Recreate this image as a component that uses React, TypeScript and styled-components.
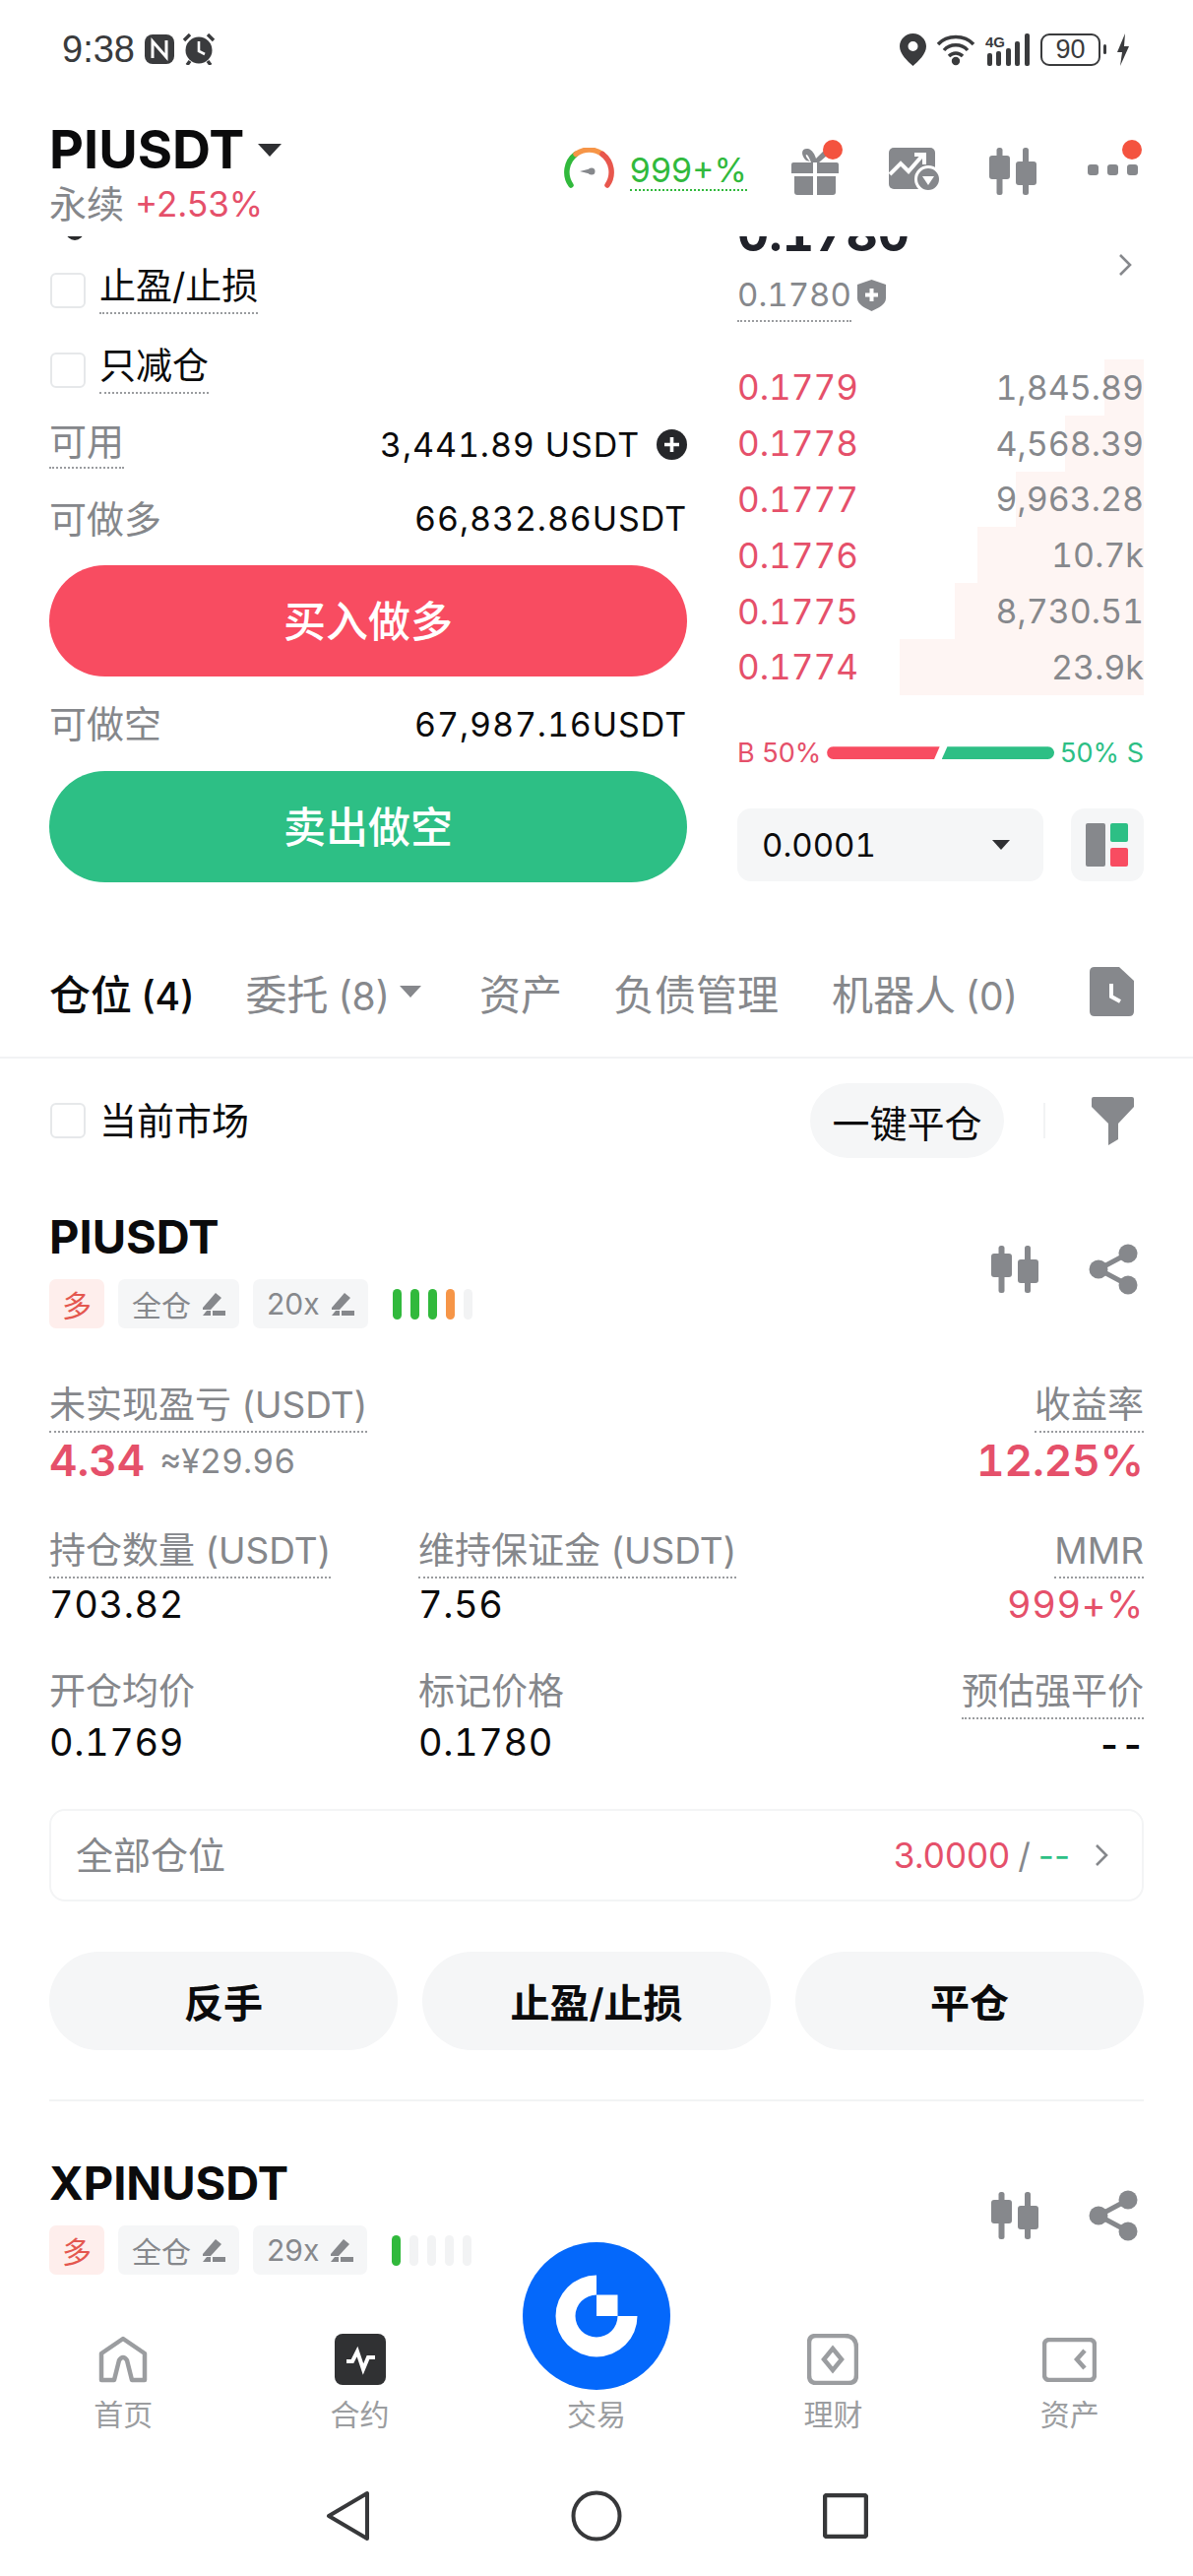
import styled, { createGlobalStyle } from "styled-components";

const GREY = "#86888c";
const LABEL = "#85878b";
const RED = "#e5506a";
const BUY = "#f84c61";
const SELL = "#2dbf85";
const SOFT = "#f5f6f7";
const DARK = "#303133";

const GlobalStyle = createGlobalStyle`
  html, body {
    margin: 0;
    padding: 0;
    background: #fff;
    font-family: Inter, "Noto Sans CJK SC", sans-serif;
    color: #0b0b0c;
  }
  * { box-sizing: border-box; }
  svg { display: block; flex-shrink: 0; }
`;

const Page = styled.div`
  width: 1212px;
  height: 2616px;
  display: flex;
  flex-direction: column;
  overflow: hidden;
  background: #fff;
`;

const StatusBar = styled.div`
  height: 100px;
  flex-shrink: 0;
  padding: 0 64px 0 63px;
  display: flex;
  align-items: center;
  justify-content: space-between;
  color: #3a3b3d;
`;

const StatusGroup = styled.div<{ $gap: number }>`
  display: flex;
  align-items: center;
  gap: ${({ $gap }) => $gap}px;
`;

const Clock = styled.span`
  font-family: "Liberation Sans", sans-serif;
  font-size: 38px;
  margin-right: 2px;
`;

const NetLabel = styled.text`
  font-family: "Liberation Sans", sans-serif;
  font-size: 15px;
  font-weight: 700;
  fill: #3a3b3d;
`;

const Battery = styled.div`
  width: 61px;
  height: 33px;
  border: 2.5px solid #3a3b3d;
  border-radius: 9px;
  display: flex;
  align-items: center;
  justify-content: center;
  font-family: "Liberation Sans", sans-serif;
  font-size: 27px;
  position: relative;
  &::after {
    content: "";
    position: absolute;
    right: -8px;
    top: 9px;
    width: 3px;
    height: 10px;
    background: #3a3b3d;
    border-radius: 2px;
  }
`;

const BoltIcon = styled.svg`
  margin-left: 6px;
`;

const Header = styled.div`
  height: 140px;
  flex-shrink: 0;
  padding: 22px 56px 0 50px;
  display: flex;
  justify-content: space-between;
`;

const Symbol = styled.div`
  display: flex;
  align-items: center;
  gap: 14px;
  font-size: 54px;
  font-weight: 700;
  line-height: 60px;
`;

const Caret = styled.div<{ $size: number; $color: string }>`
  width: 0;
  height: 0;
  border-left: ${({ $size }) => $size}px solid transparent;
  border-right: ${({ $size }) => $size}px solid transparent;
  border-top: ${({ $size }) => $size * 1.15}px solid ${({ $color }) => $color};
`;

const SubLine = styled.div`
  display: flex;
  align-items: center;
  gap: 11px;
  margin-top: 3px;
  font-size: 38px;
  line-height: 44px;
  color: ${LABEL};
`;

const Change = styled.span`
  font-size: 35px;
  color: ${RED};
`;

const Tools = styled.div`
  display: flex;
  align-items: flex-start;
  padding-top: 28px;
`;

const Risk = styled.div`
  display: flex;
  gap: 15px;
  margin-right: 45px;
`;

const RiskValue = styled.span`
  font-size: 34px;
  line-height: 36px;
  height: 44px;
  padding-top: 5px;
  color: #31b93c;
  border-bottom: 2.5px dotted #31b93c;
`;

const ToolIcon = styled.div<{ $left: number; $dot?: boolean }>`
  position: relative;
  margin-left: ${({ $left }) => $left}px;
  ${({ $dot }) =>
    $dot &&
    `&::after {
      content: "";
      position: absolute;
      right: -4px;
      top: -8px;
      width: 20px;
      height: 20px;
      border-radius: 50%;
      background: #f4533f;
    }`}
`;

const MoreWrap = styled.div`
  padding-top: 17px;
`;

const Scroll = styled.div`
  flex: 1;
  min-height: 0;
  overflow: hidden;
`;

const TradeGrid = styled.div`
  display: grid;
  grid-template-columns: 648px 413px;
  column-gap: 51px;
  padding: 0 50px;
  height: 655px;
`;

const Column = styled.div`
  min-width: 0;
`;

const Knob = styled.div`
  width: 18px;
  height: 18px;
  margin: -14px 0 10px 17px;
  border-radius: 50%;
  background: #2a2b2d;
`;

const CheckRow = styled.div<{ $h: number }>`
  height: ${({ $h }) => $h}px;
  display: flex;
  align-items: center;
  gap: 14px;
`;

const Box = styled.div`
  width: 36px;
  height: 36px;
  margin-left: 1px;
  border: 2.5px solid #e6e8ea;
  border-radius: 6px;
  background: #fff;
`;

const Dotted = styled.span<{ $size?: number; $color?: string; $plain?: boolean }>`
  display: inline-block;
  font-size: ${({ $size }) => $size ?? 37}px;
  line-height: 42px;
  padding-bottom: 5px;
  color: ${({ $color }) => $color ?? "#0b0b0c"};
  border-bottom: 2px dotted ${({ $plain }) => ($plain ? "transparent" : "#9a9c9f")};
  white-space: nowrap;
`;

const MarkPrice = styled(Dotted)`
  font-variant-numeric: tabular-nums;
`;

const Plain = styled.span<{ $size?: number; $color?: string }>`
  font-size: ${({ $size }) => $size ?? 37}px;
  line-height: 42px;
  color: ${({ $color }) => $color ?? "#0b0b0c"};
  white-space: nowrap;
`;

const InfoRow = styled.div<{ $h: number; $pad?: number }>`
  height: ${({ $h }) => $h}px;
  padding-bottom: ${({ $pad }) => $pad ?? 0}px;
  display: flex;
  align-items: center;
  justify-content: space-between;
`;

const Amount = styled.div`
  display: flex;
  align-items: center;
  gap: 17px;
  font-size: 34px;
  letter-spacing: 0.9px;
  font-variant-numeric: tabular-nums;
  white-space: nowrap;
`;

const TradeButton = styled.div<{ $bg: string }>`
  height: 113px;
  padding-bottom: 5px;
  border-radius: 57px;
  background: ${({ $bg }) => $bg};
  color: #fff;
  font-size: 43px;
  font-weight: 500;
  display: flex;
  align-items: center;
  justify-content: center;
`;

const PriceHead = styled.div`
  height: 125px;
  display: flex;
  justify-content: space-between;
  align-items: flex-start;
`;

const BigPrice = styled.div`
  margin-top: -28px;
  height: 51px;
  line-height: 51px;
  font-size: 50px;
  font-weight: 700;
  font-variant-numeric: tabular-nums;
  color: #20222a;
`;

const MarkLine = styled.div`
  margin-top: 15px;
  display: flex;
  align-items: flex-start;
  gap: 6px;
`;

const ShieldIcon = styled.svg`
  margin-top: 6px;
`;

const Chevron = styled.div`
  margin: 17px 12px 0 0;
`;

const Book = styled.div``;

const BookRow = styled.div`
  position: relative;
  height: 56.8px;
  display: flex;
  align-items: center;
  justify-content: space-between;
  font-size: 34px;
  font-variant-numeric: tabular-nums;
`;

const Depth = styled.div`
  position: absolute;
  right: 0;
  top: 0;
  bottom: 0;
  background: #fef5f3;
`;

const BookPrice = styled.span`
  position: relative;
  color: ${RED};
  font-size: 35px;
`;

const BookSize = styled.span`
  position: relative;
  color: ${GREY};
`;

const Ratio = styled.div`
  margin-top: 40px;
  height: 38px;
  display: flex;
  align-items: center;
  justify-content: space-between;
  font-size: 27px;
  white-space: nowrap;
`;

const RatioText = styled.span<{ $color: string }>`
  color: ${({ $color }) => $color};
`;

const RatioBars = styled.div`
  width: 231px;
  display: flex;
`;

const RatioBar = styled.div<{ $color: string; $side: "l" | "r" }>`
  flex: 1;
  height: 13px;
  background: ${({ $color }) => $color};
  ${({ $side }) =>
    $side === "l"
      ? "border-radius: 7px 0 0 7px; clip-path: polygon(0 0, 100% 0, 95% 100%, 0 100%); margin-right: 1px;"
      : "border-radius: 0 7px 7px 0; clip-path: polygon(5% 0, 100% 0, 100% 100%, 0 100%); margin-left: 1px;"}
`;

const DepthTools = styled.div`
  margin-top: 37px;
  display: flex;
  justify-content: space-between;
`;

const StepSelect = styled.div`
  width: 311px;
  height: 74px;
  border-radius: 14px;
  background: ${SOFT};
  padding: 0 34px 0 25px;
  display: flex;
  align-items: center;
  justify-content: space-between;
  font-size: 33px;
  font-variant-numeric: tabular-nums;
`;

const LayoutButton = styled.div`
  width: 74px;
  height: 74px;
  border-radius: 14px;
  background: ${SOFT};
  display: flex;
  align-items: center;
  justify-content: center;
`;

const Tabs = styled.div`
  margin-top: 50px;
  height: 130px;
  padding: 0 60px 4px 50px;
  border-bottom: 2px solid #f2f3f4;
  display: flex;
  align-items: center;
`;

const Tab = styled.div<{ $active?: boolean; $left?: number }>`
  display: flex;
  align-items: center;
  gap: 10px;
  margin-left: ${({ $left }) => $left ?? 0}px;
  font-size: 42px;
  white-space: nowrap;
  color: ${({ $active }) => ($active ? "#0b0b0c" : GREY)};
  font-weight: ${({ $active }) => ($active ? 500 : 400)};
`;

const TabCount = styled.span`
  font-size: 39px;
  margin-left: -2px;
`;

const TabEnd = styled.div`
  margin-left: auto;
`;

const FilterRow = styled.div`
  margin-top: 25px;
  height: 76px;
  padding: 0 60px 0 50px;
  display: flex;
  align-items: center;
  gap: 14px;
`;

const CloseAll = styled.div`
  margin-left: auto;
  width: 197px;
  height: 76px;
  border-radius: 38px;
  background: ${SOFT};
  font-size: 38px;
  display: flex;
  align-items: center;
  justify-content: center;
`;

const Divider = styled.div`
  width: 2px;
  height: 36px;
  margin: 0 33px 0 26px;
  background: #f2f3f4;
`;

const Card = styled.div<{ $top: number }>`
  margin-top: ${({ $top }) => $top}px;
  padding: 0 50px;
`;

const CardHead = styled.div`
  display: flex;
  justify-content: space-between;
  align-items: center;
`;

const CardSymbol = styled.div`
  font-size: 47px;
  line-height: 56px;
  font-weight: 700;
`;

const BadgeRow = styled.div`
  margin-top: 15px;
  display: flex;
  align-items: center;
  gap: 14px;
`;

const Badge = styled.div<{ $side?: boolean }>`
  height: 50px;
  padding: 0 ${({ $side }) => ($side ? 13 : 14)}px;
  border-radius: 7px;
  background: ${({ $side }) => ($side ? "#feeeec" : SOFT)};
  color: ${({ $side }) => ($side ? "#e4574f" : GREY)};
  font-size: 30px;
  display: flex;
  align-items: center;
  gap: 11px;
`;

const Leverage = styled.div`
  display: flex;
  gap: 9px;
  margin-left: 11px;
`;

const LevBar = styled.div<{ $color: string }>`
  width: 9px;
  height: 31px;
  border-radius: 5px;
  background: ${({ $color }) => $color};
`;

const CardTools = styled.div`
  display: flex;
  align-items: center;
  gap: 51px;
  margin-right: 6px;
`;

const StatRow = styled.div<{ $top: number }>`
  margin-top: ${({ $top }) => $top}px;
  display: grid;
  grid-template-columns: 375px 1fr auto;
`;

const StatCell = styled.div<{ $right?: boolean }>`
  display: flex;
  flex-direction: column;
  align-items: ${({ $right }) => ($right ? "flex-end" : "flex-start")};
`;

const StatValue = styled.div<{ $color?: string; $big?: boolean; $tight?: boolean }>`
  display: flex;
  align-items: center;
  gap: 15px;
  height: 46px;
  margin-top: ${({ $big, $tight }) => ($big ? 5 : $tight ? 0 : 3)}px;
  font-size: ${({ $big }) => ($big ? 44 : 38)}px;
  font-weight: ${({ $big }) => ($big ? 600 : 400)};
  letter-spacing: ${({ $big }) => ($big ? 0 : 0.6)}px;
  font-variant-numeric: tabular-nums;
  color: ${({ $color }) => $color ?? "#0b0b0c"};
`;

const Dash = styled.span`
  font-weight: 600;
  letter-spacing: -1px;
  padding-top: 6px;
`;

const Approx = styled.span`
  font-size: 34px;
  font-weight: 400;
  letter-spacing: 0;
  color: ${GREY};
`;

const AllPositions = styled.div`
  margin-top: 45px;
  height: 94px;
  padding: 0 34px 0 25px;
  border: 2px solid #f3f4f5;
  border-radius: 16px;
  display: flex;
  align-items: center;
  justify-content: space-between;
`;

const PosValues = styled.div`
  display: flex;
  align-items: center;
  font-size: 35px;
  color: ${GREY};
`;

const PosSlash = styled.span`
  margin: 0 8px;
`;

const PosChevron = styled.div`
  margin-left: 25px;
`;

const ActionRow = styled.div`
  margin-top: 51px;
  display: grid;
  grid-template-columns: repeat(3, 1fr);
  gap: 25px;
`;

const Action = styled.div`
  height: 100px;
  border-radius: 50px;
  background: ${SOFT};
  font-size: 40px;
  font-weight: 600;
  display: flex;
  align-items: center;
  justify-content: center;
`;

const CardRule = styled.div`
  margin-top: 50px;
  height: 2px;
  background: #f2f3f4;
`;

const BottomNav = styled.div`
  position: relative;
  flex-shrink: 0;
  height: 276px;
  background: #fff;
  display: flex;
  flex-direction: column;
`;

const NavItems = styled.div`
  padding: 29px 5px 0;
  display: grid;
  grid-template-columns: repeat(5, 1fr);
`;

const NavItem = styled.div`
  display: flex;
  flex-direction: column;
  align-items: center;
`;

const NavIcon = styled.div`
  height: 54px;
  display: flex;
  align-items: center;
  justify-content: center;
`;

const NavText = styled.div`
  margin-top: 9px;
  height: 40px;
  line-height: 40px;
  font-size: 30px;
  color: #9b9da0;
`;

const TradeFab = styled.div`
  position: absolute;
  left: 531px;
  top: -63px;
  width: 150px;
  height: 150px;
  border-radius: 50%;
  background: #0468fb;
`;

const SystemBar = styled.div`
  margin-top: 57px;
  display: flex;
  justify-content: center;
  align-items: center;
  gap: 204px;
`;

const ledgerRows = [
  { price: "0.1779", size: "1,845.89", depth: 40 },
  { price: "0.1778", size: "4,568.39", depth: 80 },
  { price: "0.1777", size: "9,963.28", depth: 130 },
  { price: "0.1776", size: "10.7k", depth: 169 },
  { price: "0.1775", size: "8,730.51", depth: 192 },
  { price: "0.1774", size: "23.9k", depth: 248 },
];

const Candles = ({ size = 48 }: { size?: number }) => (
  <svg width={size} height={size} viewBox="0 0 48 48" fill={GREY}>
    <rect x="7.5" y="0" width="6" height="48" rx="2.5" />
    <rect x="0" y="8" width="21" height="24" rx="3" />
    <rect x="34" y="0" width="6" height="48" rx="2.5" />
    <rect x="27" y="14" width="21" height="24" rx="3" />
  </svg>
);

const Share = () => (
  <svg width="50" height="52" viewBox="0 0 50 52">
    <path d="M40 10 L10 26 L40 42" fill="none" stroke={GREY} strokeWidth="5" />
    <circle cx="40" cy="10" r="9.5" fill={GREY} />
    <circle cx="10" cy="26" r="9.5" fill={GREY} />
    <circle cx="40" cy="42" r="9.5" fill={GREY} />
  </svg>
);

const Pencil = () => (
  <svg width="24" height="25" viewBox="0 0 24 25" fill={GREY}>
    <path d="M14 1 L20 6 L9 18 H1 V16 Z" />
    <rect x="11" y="19" width="13" height="5" />
    <path d="M1 24 H9 V19 H5 Z" />
  </svg>
);

const ChevronIcon = ({ w = 14, h = 24 }: { w?: number; h?: number }) => (
  <svg width={w} height={h} viewBox="0 0 14 24" fill="none">
    <path d="M2 2 L12 12 L2 22" stroke={GREY} strokeWidth="2.6" />
  </svg>
);

const StatusIcons = () => (
  <StatusGroup $gap={10}>
    <svg width="27" height="33" viewBox="0 0 27 33">
      <path
        fillRule="evenodd"
        d="M13.5 0 C21 0 27 6 27 13 C27 21 19 28 13.5 33 C8 28 0 21 0 13 C0 6 6 0 13.5 0 Z M13.5 8 A5 5 0 1 0 13.5 18 A5 5 0 1 0 13.5 8 Z"
        fill="#3a3b3d"
      />
    </svg>
    <svg width="40" height="33" viewBox="0 0 40 33" fill="none" stroke="#3a3b3d" strokeWidth="3.4">
      <path d="M2 11 C11 1 29 1 38 11" />
      <path d="M8 17 C14 10 26 10 32 17" />
      <path d="M13 23 C17 19 23 19 27 23" />
      <circle cx="20" cy="28" r="2.5" fill="#3a3b3d" />
    </svg>
    <svg width="46" height="33" viewBox="0 0 46 33">
      <NetLabel x="0" y="14">4G</NetLabel>
      <g fill="#3a3b3d">
        <rect x="2" y="20" width="5" height="13" rx="2" />
        <rect x="11" y="18" width="5" height="15" rx="2" />
        <rect x="21" y="15" width="5" height="18" rx="2" />
        <rect x="30" y="8" width="5" height="25" rx="2" />
        <rect x="40" y="0" width="5" height="33" rx="2" />
      </g>
    </svg>
    <Battery>90</Battery>
    <BoltIcon width="14" height="33" viewBox="0 0 14 33" fill="#3a3b3d">
      <path d="M9 0 L1 19 H6 L4 33 L13 13 H8 Z" />
    </BoltIcon>
  </StatusGroup>
);

const Gauge = () => (
  <svg width="53" height="44" viewBox="0 0 53 44" fill="none" strokeWidth="5.5" strokeLinecap="round">
    <path d="M8 38 A23 23 0 0 1 13 6.5" stroke="#31b93c" />
    <path d="M13 6.5 A23 23 0 0 1 40 6.5" stroke="#f69547" />
    <path d="M40 6.5 A23 23 0 0 1 45 38" stroke="#e8574d" />
    <path d="M17 24 L29 21 V27 Z" fill={GREY} stroke="none" />
    <circle cx="29" cy="24" r="3.5" fill={GREY} stroke="none" />
  </svg>
);

const Gift = () => (
  <svg width="48" height="48" viewBox="0 0 48 48" fill={GREY}>
    <path d="M15 13 C9 7 10 0 17 1 C21 2 24 7 25 11 L33 3 L36 8 L28 15 H20 C19 12 17 7 15 7 C14 8 16 11 19 14 Z" />
    <path d="M2 15 H22 V26 H0 V17 Q0 15 2 15 Z" />
    <path d="M26 15 H46 Q48 15 48 17 V26 H26 Z" />
    <path d="M3 29 H22 V48 H6 Q3 48 3 45 Z" />
    <path d="M26 29 H45 V45 Q45 48 42 48 H26 Z" />
  </svg>
);

const Trend = () => (
  <svg width="52" height="44" viewBox="0 0 52 44">
    <rect x="0" y="0" width="47" height="42" rx="5" fill={GREY} />
    <path d="M1 27 L12 16 L20 24 L34 8 M26 7 H36 V17" fill="none" stroke="#fff" strokeWidth="4" />
    <circle cx="40" cy="32" r="12.5" fill={GREY} stroke="#fff" strokeWidth="3" />
    <path d="M34 29 H46 L40 38 Z" fill="#fff" />
  </svg>
);

const MoreDots = () => (
  <svg width="51" height="12" viewBox="0 0 51 12" fill={GREY}>
    <rect x="0" width="11" height="11" rx="3" />
    <rect x="20" width="11" height="11" rx="3" />
    <rect x="40" width="11" height="11" rx="3" />
  </svg>
);

const Badges = ({ lev, filled }: { lev: string; filled: string[] }) => (
  <BadgeRow>
    <Badge $side>多</Badge>
    <Badge>
      全仓
      <Pencil />
    </Badge>
    <Badge>
      {lev}
      <Pencil />
    </Badge>
    <Leverage>
      {filled.map((color, i) => (
        <LevBar key={i} $color={color} />
      ))}
    </Leverage>
  </BadgeRow>
);

const CardHeader = ({ symbol, lev, filled }: { symbol: string; lev: string; filled: string[] }) => (
  <CardHead>
    <div>
      <CardSymbol>{symbol}</CardSymbol>
      <Badges lev={lev} filled={filled} />
    </div>
    <CardTools>
      <Candles />
      <Share />
    </CardTools>
  </CardHead>
);

export default function App() {
  return (
    <Page>
      <GlobalStyle />
      <StatusBar>
        <StatusGroup $gap={8}>
          <Clock>9:38</Clock>
          <svg width="30" height="30" viewBox="0 0 30 30">
            <rect width="30" height="30" rx="8" fill="#3a3b3d" />
            <path d="M8 24 V7 L22 23 V6" fill="none" stroke="#fff" strokeWidth="3" />
          </svg>
          <svg width="34" height="32" viewBox="0 0 34 32">
            <circle cx="17" cy="17" r="13.5" fill="#3a3b3d" />
            <path d="M17 8 V18 L23 21" fill="none" stroke="#fff" strokeWidth="2.6" />
            <path d="M2 7 L8 1 M32 7 L26 1 M8 28 L5 32 M26 28 L29 32" stroke="#3a3b3d" strokeWidth="3.4" />
          </svg>
        </StatusGroup>
        <StatusIcons />
      </StatusBar>

      <Header>
        <div>
          <Symbol>
            PIUSDT
            <Caret $size={12} $color="#2f3033" />
          </Symbol>
          <SubLine>
            永续
            <Change>+2.53%</Change>
          </SubLine>
        </div>
        <Tools>
          <Risk>
            <Gauge />
            <RiskValue>999+%</RiskValue>
          </Risk>
          <ToolIcon $left={0} $dot>
            <Gift />
          </ToolIcon>
          <ToolIcon $left={51}>
            <Trend />
          </ToolIcon>
          <ToolIcon $left={50}>
            <Candles />
          </ToolIcon>
          <ToolIcon $left={52} $dot>
            <MoreWrap>
              <MoreDots />
            </MoreWrap>
          </ToolIcon>
        </Tools>
      </Header>

      <Scroll>
        <TradeGrid>
          <Column>
            <Knob />
            <CheckRow $h={81}>
              <Box />
              <Dotted>止盈/止损</Dotted>
            </CheckRow>
            <CheckRow $h={81}>
              <Box />
              <Dotted>只减仓</Dotted>
            </CheckRow>
            <InfoRow $h={70}>
              <Dotted $size={38} $color={LABEL}>可用</Dotted>
              <Amount>
                3,441.89 USDT
                <svg width="31" height="31" viewBox="0 0 31 31">
                  <circle cx="15.5" cy="15.5" r="15.5" fill="#26272a" />
                  <path d="M15.5 8 V23 M8 15.5 H23" stroke="#fff" strokeWidth="3.6" />
                </svg>
              </Amount>
            </InfoRow>
            <InfoRow $h={88} $pad={7}>
              <Plain $size={38} $color={LABEL}>可做多</Plain>
              <Amount>66,832.86USDT</Amount>
            </InfoRow>
            <TradeButton $bg={BUY}>买入做多</TradeButton>
            <InfoRow $h={96}>
              <Plain $size={38} $color={LABEL}>可做空</Plain>
              <Amount>67,987.16USDT</Amount>
            </InfoRow>
            <TradeButton $bg={SELL}>卖出做空</TradeButton>
          </Column>

          <Column>
            <PriceHead>
              <div>
                <BigPrice>0.1780</BigPrice>
                <MarkLine>
                  <MarkPrice $size={33} $color={GREY}>0.1780</MarkPrice>
                  <ShieldIcon width="29" height="32" viewBox="0 0 29 32">
                    <path d="M14.5 0 L29 5 V19 C29 25 21 29 14.5 32 C8 29 0 25 0 19 V5 Z" fill={GREY} />
                    <path d="M14.5 9 V22 M8 15.5 H21" stroke="#fff" strokeWidth="4" />
                  </ShieldIcon>
                </MarkLine>
              </div>
              <Chevron>
                <ChevronIcon />
              </Chevron>
            </PriceHead>
            <Book>
              {ledgerRows.map((row) => (
                <BookRow key={row.price}>
                  <Depth style={{ width: row.depth }} />
                  <BookPrice>{row.price}</BookPrice>
                  <BookSize>{row.size}</BookSize>
                </BookRow>
              ))}
            </Book>
            <Ratio>
              <RatioText $color={RED}>B 50%</RatioText>
              <RatioBars>
                <RatioBar $color={BUY} $side="l" />
                <RatioBar $color={SELL} $side="r" />
              </RatioBars>
              <RatioText $color={SELL}>50% S</RatioText>
            </Ratio>
            <DepthTools>
              <StepSelect>
                0.0001
                <Caret $size={9} $color="#2f3033" />
              </StepSelect>
              <LayoutButton>
                <svg width="44" height="44" viewBox="0 0 44 44">
                  <rect x="0" y="0" width="20" height="44" rx="2" fill={GREY} />
                  <rect x="25" y="0" width="18" height="19" rx="2" fill={SELL} />
                  <rect x="25" y="25" width="18" height="19" rx="2" fill={BUY} />
                </svg>
              </LayoutButton>
            </DepthTools>
          </Column>
        </TradeGrid>

        <Tabs>
          <Tab $active>
            <span>
              仓位 <TabCount>(4)</TabCount>
            </span>
          </Tab>
          <Tab $left={52}>
            <span>
              委托 <TabCount>(8)</TabCount>
            </span>
            <Caret $size={11} $color={GREY} />
          </Tab>
          <Tab $left={59}>资产</Tab>
          <Tab $left={52}>负债管理</Tab>
          <Tab $left={54}>
            <span>
              机器人 <TabCount>(0)</TabCount>
            </span>
          </Tab>
          <TabEnd>
            <svg width="45" height="50" viewBox="0 0 45 50">
              <path d="M5 0 H30 L45 14 V45 Q45 50 40 50 H5 Q0 50 0 45 V5 Q0 0 5 0 Z" fill={GREY} />
              <path d="M22 17 V30 L31 35" fill="none" stroke="#fff" strokeWidth="4" />
            </svg>
          </TabEnd>
        </Tabs>

        <FilterRow>
          <Box />
          <Plain $size={38}>当前市场</Plain>
          <CloseAll>一键平仓</CloseAll>
          <Divider />
          <svg width="43" height="49" viewBox="0 0 43 49" fill={GREY}>
            <path d="M2 0 H41 Q43 0 43 2 V10 L27 27 V43 L17 49 V27 L0 10 V2 Q0 0 2 0 Z" />
          </svg>
        </FilterRow>

        <Card $top={52}>
          <CardHeader
            symbol="PIUSDT"
            lev="20x"
            filled={["#31b93c", "#31b93c", "#31b93c", "#f69547", "#f2f3f4"]}
          />
          <StatRow $top={57}>
            <StatCell>
              <Dotted $color={LABEL}>未实现盈亏 (USDT)</Dotted>
              <StatValue $big $color={RED}>
                4.34
                <Approx>≈¥29.96</Approx>
              </StatValue>
            </StatCell>
            <StatCell />
            <StatCell $right>
              <Dotted $color={LABEL}>收益率</Dotted>
              <StatValue $big $color={RED}>12.25%</StatValue>
            </StatCell>
          </StatRow>
          <StatRow $top={48}>
            <StatCell>
              <Dotted $color={LABEL}>持仓数量 (USDT)</Dotted>
              <StatValue>703.82</StatValue>
            </StatCell>
            <StatCell>
              <Dotted $color={LABEL}>维持保证金 (USDT)</Dotted>
              <StatValue>7.56</StatValue>
            </StatCell>
            <StatCell $right>
              <Dotted $color={LABEL}>MMR</Dotted>
              <StatValue $color={RED}>999+%</StatValue>
            </StatCell>
          </StatRow>
          <StatRow $top={45}>
            <StatCell>
              <Dotted $plain $color={LABEL}>开仓均价</Dotted>
              <StatValue $tight>0.1769</StatValue>
            </StatCell>
            <StatCell>
              <Dotted $plain $color={LABEL}>标记价格</Dotted>
              <StatValue $tight>0.1780</StatValue>
            </StatCell>
            <StatCell $right>
              <Dotted $color={LABEL}>预估强平价</Dotted>
              <StatValue $tight>
                <Dash>--</Dash>
              </StatValue>
            </StatCell>
          </StatRow>
          <AllPositions>
            <Plain $size={38} $color={LABEL}>全部仓位</Plain>
            <PosValues>
              <Plain $size={35} $color={RED}>3.0000</Plain>
              <PosSlash>/</PosSlash>
              <Plain $size={35} $color={SELL}>--</Plain>
              <PosChevron>
                <ChevronIcon />
              </PosChevron>
            </PosValues>
          </AllPositions>
          <ActionRow>
            <Action>反手</Action>
            <Action>止盈/止损</Action>
            <Action>平仓</Action>
          </ActionRow>
          <CardRule />
        </Card>

        <Card $top={55}>
          <CardHeader
            symbol="XPINUSDT"
            lev="29x"
            filled={["#31b93c", "#f2f3f4", "#f2f3f4", "#f2f3f4", "#f2f3f4"]}
          />
        </Card>
      </Scroll>

      <BottomNav>
        <TradeFab>
          <svg width="150" height="150" viewBox="0 0 150 150" fill="#fff">
            <path d="M75 33.5 A41.5 41.5 0 1 0 116.5 75 H96.5 A21.5 21.5 0 1 1 75 53.5 V75 H96.5 V53.5 H75 Z" />
          </svg>
        </TradeFab>
        <NavItems>
          <NavItem>
            <NavIcon>
              <svg width="50" height="48" viewBox="0 0 50 48" fill="none" stroke="#9b9da0" strokeWidth="4.5" strokeLinejoin="round">
                <path d="M3 45 V18 L25 3 L47 18 V45 H34 L29 25 Q25 19 21 25 L16 45 Z" />
              </svg>
            </NavIcon>
            <NavText>首页</NavText>
          </NavItem>
          <NavItem>
            <NavIcon>
              <svg width="52" height="52" viewBox="0 0 52 52">
                <rect width="52" height="52" rx="8" fill={DARK} />
                <path d="M12 28 H18 L23 18 L29 36 L34 24 H41" fill="none" stroke="#fff" strokeWidth="4" />
              </svg>
            </NavIcon>
            <NavText>合约</NavText>
          </NavItem>
          <NavItem>
            <NavIcon />
            <NavText>交易</NavText>
          </NavItem>
          <NavItem>
            <NavIcon>
              <svg width="52" height="52" viewBox="0 0 52 52" fill="none" stroke="#9b9da0" strokeWidth="4.5">
                <path d="M9 2 H38 Q50 2 50 14 V42 Q50 50 42 50 H9 Q2 50 2 42 V9 Q2 2 9 2 Z" />
                <path d="M26 15 L35 26 L26 37 L17 26 Z" />
              </svg>
            </NavIcon>
            <NavText>理财</NavText>
          </NavItem>
          <NavItem>
            <NavIcon>
              <svg width="55" height="45" viewBox="0 0 55 45" fill="none" stroke="#9b9da0" strokeWidth="4.5">
                <rect x="2" y="2" width="51" height="41" rx="5" />
                <path d="M43 13 L35 22 L43 31" />
              </svg>
            </NavIcon>
            <NavText>资产</NavText>
          </NavItem>
        </NavItems>
        <SystemBar>
          <svg width="45" height="52" viewBox="0 0 45 52" fill="none" stroke="#37383a" strokeWidth="4" strokeLinejoin="round">
            <path d="M42 3 V49 L3 26 Z" />
          </svg>
          <svg width="52" height="52" viewBox="0 0 52 52" fill="none" stroke="#37383a" strokeWidth="4">
            <circle cx="26" cy="26" r="23.5" />
          </svg>
          <svg width="46" height="46" viewBox="0 0 46 46" fill="none" stroke="#37383a" strokeWidth="4.5">
            <rect x="2" y="2" width="42" height="42" rx="2" />
          </svg>
        </SystemBar>
      </BottomNav>
    </Page>
  );
}
